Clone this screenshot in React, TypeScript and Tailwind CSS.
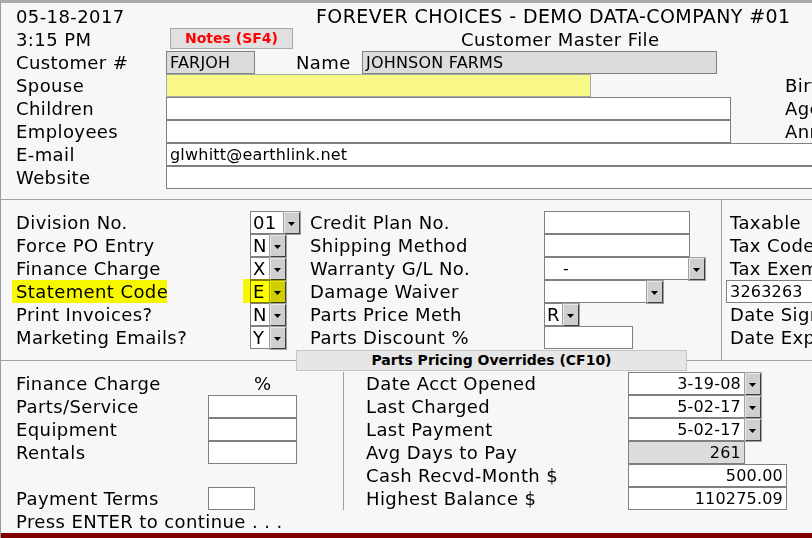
import type { ReactNode } from "react";

function Arrow() {
  return (
    <div className="flex h-[22px] w-[16px] shrink-0 items-center justify-center border border-t-[#e8e8e8] border-l-[#e8e8e8] border-r-[#404040] border-b-[#404040] bg-[#cfcfcf] outline outline-1 outline-[#a0a0a0]">
      <svg width="8" height="5" viewBox="0 0 8 5" className="mt-[3px]">
        <path d="M0 0 H7 L3.5 4 Z" fill="#000" />
      </svg>
    </div>
  );
}

function Box({
  w,
  children,
  gray,
  right,
  className = "",
}: {
  w: string;
  children?: ReactNode;
  gray?: boolean;
  right?: boolean;
  className?: string;
}) {
  return (
    <div
      className={`flex h-[23px] shrink-0 items-center overflow-hidden whitespace-nowrap border border-[#808080] px-[3px] text-[16px] tracking-[0.2px] ${
        gray ? "bg-[#dcdcdc]" : "bg-white"
      } ${right ? "justify-end" : ""} ${w} ${className}`}
    >
      {children}
    </div>
  );
}

function Select({ w, value, right }: { w: string; value?: string; right?: boolean }) {
  return (
    <div className="flex shrink-0 items-center">
      <Box w={w} right={right}>
        {value}
      </Box>
      <Arrow />
    </div>
  );
}

function Code({ w, value }: { w: string; value: string }) {
  return (
    <div className="flex shrink-0 items-center">
      <div
        className={`flex h-[23px] items-center border border-[#808080] bg-white pl-[2px] text-[18px] ${w}`}
      >
        {value}
      </div>
      <Arrow />
    </div>
  );
}

function Row({ children, className = "" }: { children?: ReactNode; className?: string }) {
  return (
    <div className={`flex h-[23px] items-center whitespace-nowrap [&>*]:shrink-0 ${className}`}>
      {children}
    </div>
  );
}

export default function App() {
  return (
    <div className="h-[538px] w-[812px] overflow-hidden border-l border-t-[3px] border-l-[#9a9a9a] border-t-[#ababab] bg-[#f7f7f7] font-['DejaVu_Sans',Verdana,sans-serif] text-[18px] tracking-[0.4px] text-black">
      {/* header */}
      <div className="h-[197px] border-b border-[#a0a0a0] pl-[15px] pt-[2px]">
        <Row>
          <span className="w-[300px]">05-18-2017</span>
          <span className="text-[19px] tracking-[0.4px]">FOREVER CHOICES - DEMO DATA-COMPANY #01</span>
        </Row>
        <Row>
          <span className="w-[154px]">3:15 PM</span>
          <div className="flex h-[21px] w-[123px] items-center justify-center self-start border border-[#a8a8a8] bg-[#e0e0e0] text-[14px] font-bold tracking-normal text-[#ff0000]">
            Notes (SF4)
          </div>
          <span className="ml-[168px]">Customer Master File</span>
        </Row>
        <Row>
          <span className="w-[150px]">Customer #</span>
          <Box w="w-[89px]" gray>
            FARJOH
          </Box>
          <span className="ml-[41px] w-[66px]">Name</span>
          <Box w="w-[355px]" gray>
            JOHNSON FARMS
          </Box>
        </Row>
        <Row>
          <span className="w-[150px]">Spouse</span>
          <div className="h-[23px] w-[425px] border border-[#a8a8a8] bg-[#f8f888]" />
          <span className="ml-[194px]">Birthdate</span>
        </Row>
        <Row>
          <span className="w-[150px]">Children</span>
          <Box w="w-[565px]" />
          <span className="ml-[54px]">Age</span>
        </Row>
        <Row>
          <span className="w-[150px]">Employees</span>
          <Box w="w-[565px]" />
          <span className="ml-[54px]">Anniversary</span>
        </Row>
        <Row>
          <span className="w-[150px]">E-mail</span>
          <Box w="w-[700px]">glwhitt@earthlink.net</Box>
        </Row>
        <Row>
          <span className="w-[150px]">Website</span>
          <Box w="w-[700px]" />
        </Row>
      </div>

      {/* account settings */}
      <div className="flex h-[161px] border-b border-[#a0a0a0]">
        <div className="relative w-[309px] shrink-0 pl-[15px] pt-[11px]">
          <Row>
            <span className="w-[234px]">Division No.</span>
            <Code w="w-[34px]" value="01" />
          </Row>
          <Row>
            <span className="w-[234px]">Force PO Entry</span>
            <Code w="w-[20px]" value="N" />
          </Row>
          <Row>
            <span className="w-[234px]">Finance Charge</span>
            <Code w="w-[20px]" value="X" />
          </Row>
          <Row className="relative">
            <span className="w-[234px]">Statement Code</span>
            <Code w="w-[20px]" value="E" />
            <div className="absolute left-[-4px] top-0 h-[23px] w-[155px] bg-[#ffff00] mix-blend-multiply" />
            <div className="absolute left-[227px] top-[-1px] h-[24px] w-[42px] bg-[#ffff00] mix-blend-multiply" />
          </Row>
          <Row>
            <span className="w-[234px]">Print Invoices?</span>
            <Code w="w-[20px]" value="N" />
          </Row>
          <Row>
            <span className="w-[234px]">Marketing Emails?</span>
            <Code w="w-[20px]" value="Y" />
          </Row>
        </div>

        <div className="w-[411px] shrink-0 pt-[11px]">
          <Row>
            <span className="w-[234px]">Credit Plan No.</span>
            <Box w="w-[146px]" />
          </Row>
          <Row>
            <span className="w-[234px]">Shipping Method</span>
            <Box w="w-[146px]" />
          </Row>
          <Row>
            <span className="w-[234px]">Warranty G/L No.</span>
            <Box w="w-[145px]" className="pl-[18px]">
              -
            </Box>
            <Arrow />
          </Row>
          <Row>
            <span className="w-[234px]">Damage Waiver</span>
            <Select w="w-[103px]" />
          </Row>
          <Row>
            <span className="w-[234px]">Parts Price Meth</span>
            <Code w="w-[19px]" value="R" />
          </Row>
          <Row>
            <span className="w-[234px]">Parts Discount %</span>
            <Box w="w-[89px]" />
          </Row>
        </div>

        <div className="min-w-0 flex-1 border-l border-[#a0a0a0] pt-[11px]">
          <Row className="pl-[8px]">Taxable</Row>
          <Row className="pl-[8px]">Tax Code</Row>
          <Row className="pl-[8px]">Tax Exempt #</Row>
          <Row className="pl-[4px]">
            <Box w="w-[100px]">3263263</Box>
          </Row>
          <Row className="pl-[8px]">Date Signed</Row>
          <Row className="pl-[8px]">Date Expires</Row>
        </div>
      </div>

      <div className="relative -mt-[11px] ml-[295px] flex h-[21px] w-[391px] items-center justify-center border border-[#c4c4c4] bg-[#e6e6e6] text-[14px] font-bold tracking-normal">
        Parts Pricing Overrides (CF10)
      </div>

      {/* pricing and history */}
      <div className="flex pt-[1px]">
        <div className="w-[343px] shrink-0 border-r border-[#a0a0a0] pl-[15px]">
          <Row>
            <span className="w-[192px]">Finance Charge</span>
            <span className="ml-[46px]">%</span>
          </Row>
          <Row>
            <span className="w-[192px]">Parts/Service</span>
            <Box w="w-[89px]" />
          </Row>
          <Row>
            <span className="w-[192px]">Equipment</span>
            <Box w="w-[89px]" />
          </Row>
          <Row>
            <span className="w-[192px]">Rentals</span>
            <Box w="w-[89px]" />
          </Row>
          <Row />
          <Row>
            <span className="w-[192px]">Payment Terms</span>
            <Box w="w-[47px]" />
          </Row>
        </div>
        <div className="pl-[22px]">
          <Row>
            <span className="w-[262px]">Date Acct Opened</span>
            <Select w="w-[117px]" value="3-19-08" right />
          </Row>
          <Row>
            <span className="w-[262px]">Last Charged</span>
            <Select w="w-[117px]" value="5-02-17" right />
          </Row>
          <Row>
            <span className="w-[262px]">Last Payment</span>
            <Select w="w-[117px]" value="5-02-17" right />
          </Row>
          <Row>
            <span className="w-[262px]">Avg Days to Pay</span>
            <Box w="w-[117px]" gray right>
              261
            </Box>
          </Row>
          <Row>
            <span className="w-[262px]">Cash Recvd-Month $</span>
            <Box w="w-[159px]" right>
              500.00
            </Box>
          </Row>
          <Row>
            <span className="w-[262px]">Highest Balance $</span>
            <Box w="w-[159px]" right>
              110275.09
            </Box>
          </Row>
        </div>
      </div>

      <Row className="pl-[15px]">Press ENTER to continue . . .</Row>
      <div className="h-[8px] bg-[#800000]" />
    </div>
  );
}
